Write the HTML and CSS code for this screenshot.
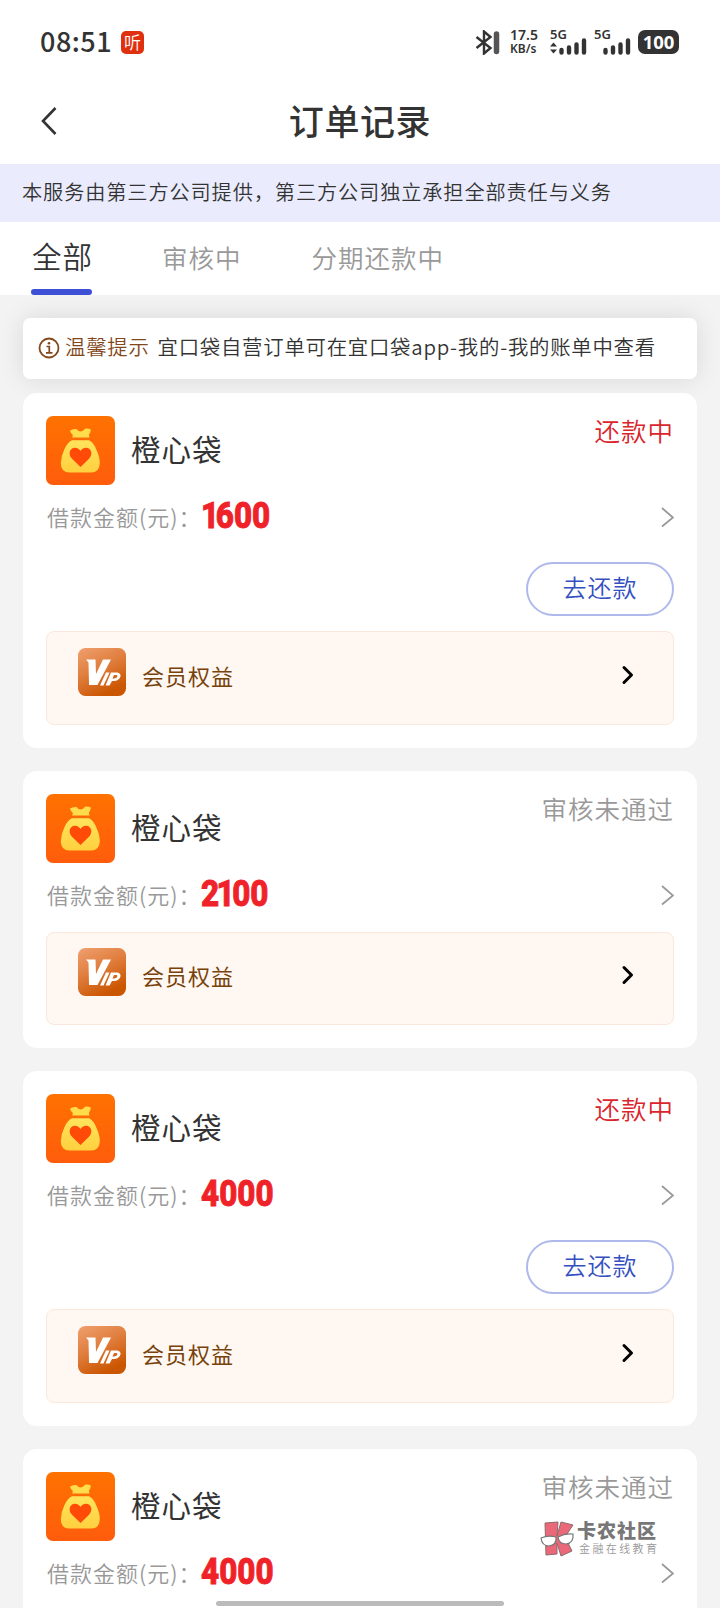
FILE: index.html
```html
<!DOCTYPE html>
<html lang="zh-CN">
<head>
<meta charset="utf-8">
<title>订单记录</title>
<link rel="stylesheet" href="styles.css">
</head>
<body>
<svg class="defs" width="0" height="0">
  <defs>
    <linearGradient id="orange" x1="0" y1="0" x2="0" y2="1"><stop offset="0" stop-color="#ff7200"/><stop offset="1" stop-color="#ff5c0c"/></linearGradient>
    <linearGradient id="gold" x1="0" y1="0" x2="0" y2="1"><stop offset="0" stop-color="#ffe45c"/><stop offset="1" stop-color="#ffd03e"/></linearGradient>
    <linearGradient id="copper" x1="0" y1="0" x2=".5" y2="1"><stop offset="0" stop-color="#f0a070"/><stop offset=".5" stop-color="#e07e3e"/><stop offset="1" stop-color="#cb5602"/></linearGradient>
  </defs>
  <symbol id="bag" viewBox="0 0 69 69">
    <rect width="69" height="69" rx="7" fill="url(#orange)"/>
    <path d="M24 14.500Q27 12.500 30.500 13Q32.500 15.500 34.500 15.500Q37 15.500 39 12.800Q42 12.200 44.800 13.500Q45 16.500 43 18.500Q43 20.500 43.500 21.500H26Q27.500 20 26.500 18.500Q24.500 17 24 14.500Z" fill="#ffdc4c"/>
    <path d="M26 24.300H43Q48 27 50.500 34Q54 41.500 53.800 47.500Q53.500 56.500 45 56.500H23.500Q15 56.500 14.800 47.500Q15 40 18.500 33Q21.500 26.500 26 24.300Z" fill="url(#gold)"/>
    <path d="M34.500 51L26.500 43.300C21.500 38.500 23.500 31.800 29 31.700C31.500 31.700 33.500 33.200 34.500 35C35.500 33.200 37.500 31.700 40 31.700C45.500 31.800 47.500 38.500 42.500 43.300Z" fill="#ff4a08"/>
  </symbol>
  <symbol id="vip" viewBox="0 0 48 48">
    <rect width="48" height="48" rx="7.500" fill="url(#copper)"/>
    <g fill="#fff">
      <path d="M8 11.500H17.500L18 26L25 11.500H33L19.500 37H11L10.500 14.500Z"/>
      <path d="M28 24.500H31.500L25.500 37.500H22Z"/>
      <path fill-rule="evenodd" d="M33 24.500H39.500Q43.500 25.500 42.300 29Q40.500 33 36 33H34L31.500 37.500H27.500ZM36 27L34.500 30.500H36.500Q39 30 39.500 28Q39.500 27 38 27Z"/>
    </g>
  </symbol>
  <symbol id="next" viewBox="0 0 14 22"><path d="M2 2L13 11.500L2 20.500" fill="none" stroke="#999" stroke-width="1.800"/></symbol>
  <symbol id="next-bold" viewBox="0 0 14 22"><path d="M3 3.500L10.500 11L3 18.500" fill="none" stroke="#000" stroke-width="3" stroke-linecap="round" stroke-linejoin="round"/></symbol>
  <symbol id="signal" viewBox="0 0 28 18">
    <g stroke="#333" stroke-width="4.400" stroke-linecap="round"><path d="M2.500 12V14.500M10 9.500V14.500M17.500 6.500V14.500M25 2.500V14.500"/></g>
  </symbol>
</svg>

<div class="screen">
  <header class="status-bar">
    <span class="clock">08:51</span>
    <span class="app-badge">听</span>
    <div class="status-icons">
      <svg class="bluetooth" width="26" height="25" viewBox="0 0 26 25"><path d="M1.500 7L15.500 18L9 23.500V1.500L15.500 7L1.500 18" fill="none" stroke="#333" stroke-width="2.400"/><path d="M21.500 4V21.500" stroke="#555" stroke-width="5.500" stroke-linecap="round"/></svg>
      <div class="net-speed"><span>17.5</span><span class="unit">KB/s</span></div>
      <div class="network"><span>5G</span><svg width="37" height="18" viewBox="0 0 37 18"><path d="M0 8.500L3.500 4.500L7 8.500ZM0 11.500L3.500 15.500L7 11.500Z" fill="#333"/><use href="#signal" x="9" width="28" height="18"/></svg></div>
      <div class="network"><span>5G</span><svg width="37" height="18" viewBox="0 0 37 18"><use href="#signal" x="9" width="28" height="18"/></svg></div>
      <span class="battery">100</span>
    </div>
  </header>
  <nav class="title-bar">
    <svg class="back" width="18" height="30" viewBox="0 0 18 30"><path d="M15.500 2L3 15L15.500 28" fill="none" stroke="#333" stroke-width="2.600"/></svg>
    <h1>订单记录</h1>
  </nav>
  <p class="disclaimer">本服务由第三方公司提供，第三方公司独立承担全部责任与义务</p>
  <div class="tabs"><span class="tab tab-active">全部</span><span class="tab">审核中</span><span class="tab">分期还款中</span></div>

  <main>
    <div class="notice">
      <svg width="22" height="22" viewBox="0 0 22 22"><circle cx="11" cy="11" r="9.500" fill="none" stroke="#82481c" stroke-width="1.800"/><path d="M8.500 9.500H11.300V15.500M8 15.800H14.500" fill="none" stroke="#82481c" stroke-width="1.700"/><circle cx="11" cy="6.300" r="1.300" fill="#82481c"/></svg>
      <span class="notice-label">温馨提示</span>
      <span class="notice-text">宜口袋自营订单可在宜口袋app-我的-我的账单中查看</span>
    </div>

    <article class="card">
      <div class="card-head"><svg class="logo"><use href="#bag"/></svg><h2>橙心袋</h2><span class="state state-due">还款中</span></div>
      <div class="loan"><span class="loan-label">借款金额(元)：</span><span class="amount"><i class="lead">1</i>600</span><svg class="arrow"><use href="#next"/></svg></div>
      <div class="actions"><button class="repay">去还款</button></div>
      <div class="benefit"><svg class="vip"><use href="#vip"/></svg><span>会员权益</span><svg class="arrow"><use href="#next-bold"/></svg></div>
    </article>

    <article class="card">
      <div class="card-head"><svg class="logo"><use href="#bag"/></svg><h2>橙心袋</h2><span class="state">审核未通过</span></div>
      <div class="loan"><span class="loan-label">借款金额(元)：</span><span class="amount">2<i>1</i>00</span><svg class="arrow"><use href="#next"/></svg></div>
      <div class="benefit"><svg class="vip"><use href="#vip"/></svg><span>会员权益</span><svg class="arrow"><use href="#next-bold"/></svg></div>
    </article>

    <article class="card">
      <div class="card-head"><svg class="logo"><use href="#bag"/></svg><h2>橙心袋</h2><span class="state state-due">还款中</span></div>
      <div class="loan"><span class="loan-label">借款金额(元)：</span><span class="amount">4000</span><svg class="arrow"><use href="#next"/></svg></div>
      <div class="actions"><button class="repay">去还款</button></div>
      <div class="benefit"><svg class="vip"><use href="#vip"/></svg><span>会员权益</span><svg class="arrow"><use href="#next-bold"/></svg></div>
    </article>

    <article class="card card-last">
      <div class="card-head"><svg class="logo"><use href="#bag"/></svg><h2>橙心袋</h2><span class="state">审核未通过</span></div>
      <div class="loan"><span class="loan-label">借款金额(元)：</span><span class="amount">4000</span><svg class="arrow"><use href="#next"/></svg></div>
    </article>
  </main>

  <div class="watermark">
    <svg width="35" height="36" viewBox="0 0 35 36">
      <g fill="#ea6878" stroke="#8c6a6e" stroke-width="1"><path d="M5 2L18 1L17 15L21 1L33 4L25 16L32 30L21 35L17 22V33L6 34Z"/></g>
      <g fill="#fff" stroke="#777" stroke-width="1.200"><path d="M1 17Q8 14 16 16Q17 24 9 25Q2 25 1 17Z"/><path d="M18 16Q25 12 33 13Q34 22 26 23Q19 23 18 16Z"/></g>
    </svg>
    <div class="watermark-text"><strong>卡农社区</strong><span>金融在线教育</span></div>
  </div>
  <div class="home-indicator"></div>
</div>
</body>
</html>
```

FILE: styles.css
```css
* { box-sizing: border-box; margin: 0; padding: 0; }
body { background: #f3f3f3; color: #333; font-family: "Noto Sans CJK SC", sans-serif; font-weight: 350; }
svg { display: block; flex: none; }
.defs { position: absolute; }
.screen { position: relative; width: 720px; height: 1608px; overflow: hidden; white-space: nowrap; }

.status-bar { display: flex; align-items: center; height: 84px; padding: 0 40px; background: #fff; }
.clock { width: 81px; font: 500 27px/82px "Noto Sans CJK SC", sans-serif; letter-spacing: .5px; padding-bottom: 2px; }
.app-badge { width: 23px; height: 23px; border-radius: 5px; background: #df3110; color: #fff; font-size: 17px; line-height: 22px; text-align: center; }
.status-icons { display: flex; align-items: center; margin: 0 1px 0 auto; }
.bluetooth { margin-right: 9px; }
.net-speed { display: flex; flex-direction: column; width: 40px; font: 600 14px/14px "Noto Sans", sans-serif; }
.net-speed .unit { font-size: 12px; line-height: 14px; }
.network { display: flex; flex-direction: column; width: 44px; height: 27px; font: 600 13px/11px "Noto Sans", sans-serif; }
.network svg { margin-top: -2px; }
.battery { width: 41px; height: 24px; border-radius: 7px; background: #333; color: #fff; font: 700 18.500px/24px "Noto Sans", sans-serif; text-align: center; }

.title-bar { display: grid; grid-template-columns: 100px 1fr 100px; align-items: center; height: 80px; background: #fff; }
.back { margin: -7px 0 0 40px; }
h1 { margin-top: -8px; font-size: 35px; font-weight: 500; line-height: 50px; letter-spacing: .6px; text-align: center; }
.disclaimer { height: 58px; padding-left: 22px; background: #eaecfd; font-size: 20.200px; line-height: 55px; letter-spacing: .88px; }
.tabs { display: flex; height: 73px; padding-left: 31px; gap: 70px; background: #fff; }
.tab { color: #999; font-size: 25.500px; line-height: 70px; letter-spacing: 1px; }
.tab-active { display: flex; flex-direction: column; justify-content: space-between; width: 61px; padding-left: 1px; color: #333; font-size: 29.500px; line-height: 66px; }
.tab-active::after { content: ""; height: 6px; margin-left: -1px; border-radius: 3px; background: #3e50d5; }

main { padding: 23px 23px 0; }
.notice { display: flex; align-items: center; height: 61px; padding: 0 16px 2px 15px; margin-bottom: 14px; border-radius: 7px; background: #fff; box-shadow: 0 0 26px rgba(0,0,0,.11); font-size: 20.400px; letter-spacing: .75px; line-height: 55px; }
.notice span { padding-bottom: 2px; }
.notice-label { margin-left: 5px; color: #82481c; }
.notice-text { margin-left: 8px; }

.card { margin-bottom: 23px; padding: 23px; border-radius: 14px; background: #fff; }
.card-last { height: 277px; }
.card-head { display: flex; align-items: flex-start; height: 70px; }
.logo { width: 69px; height: 69px; }
h2 { margin-left: 16px; font-size: 29.500px; font-weight: 400; letter-spacing: 1px; line-height: 64px; }
.state { margin-left: auto; color: #999; font-size: 25.500px; line-height: 28px; letter-spacing: 1px; }
.state-due { color: #d9262c; }
.loan { display: flex; align-items: center; height: 62px; }
.loan-label { width: 155px; padding: 0 0 2px 1px; color: #999; font-size: 22px; letter-spacing: 1px; }
.amount { color: #f02229; font: 800 37px/40px Roboto, sans-serif; transform: scaleX(.85) translateY(-1px); transform-origin: left; -webkit-text-stroke: 1px #f02229; }
.amount i { font-style: normal; margin: 0 -3px; }
.amount .lead { margin-left: 0; margin-right: -4px; }
.arrow { width: 14px; height: 22px; margin-left: auto; }
.actions { display: flex; justify-content: flex-end; height: 83px; padding-top: 14px; }
.repay { width: 148px; height: 54px; border: 2px solid #afb9eb; border-radius: 27px; background: #fff; color: #3450c0; font: 350 24px/44px "Noto Sans CJK SC", sans-serif; letter-spacing: 1px; padding-bottom: 4px; }
.benefit { display: flex; height: 94px; padding: 16px 38px 0 31px; border: 1px solid #fae8dc; border-radius: 8px; background: #fff7f1; }
.loan + .benefit { height: 93px; margin-top: 6px; padding-top: 15px; }
.vip { width: 48px; height: 48px; }
.benefit span { margin-left: 16px; color: #78420b; font-size: 22px; font-weight: 400; letter-spacing: 1px; line-height: 54px; }
.benefit .arrow { margin-top: 16px; }

.watermark { position: absolute; left: 540px; top: 1521px; display: flex; gap: 2px; }
.watermark-text { display: flex; flex-direction: column; gap: 3px; color: #777; }
.watermark strong { font-size: 19px; line-height: 18px; letter-spacing: 1px; font-weight: 900; }
.watermark-text span { padding-left: 2px; color: #999; font-size: 11px; line-height: 12px; letter-spacing: 2.400px; }
.home-indicator { position: absolute; left: 216px; top: 1601px; width: 288px; height: 5px; border-radius: 3px; background: #bbb; }
```
